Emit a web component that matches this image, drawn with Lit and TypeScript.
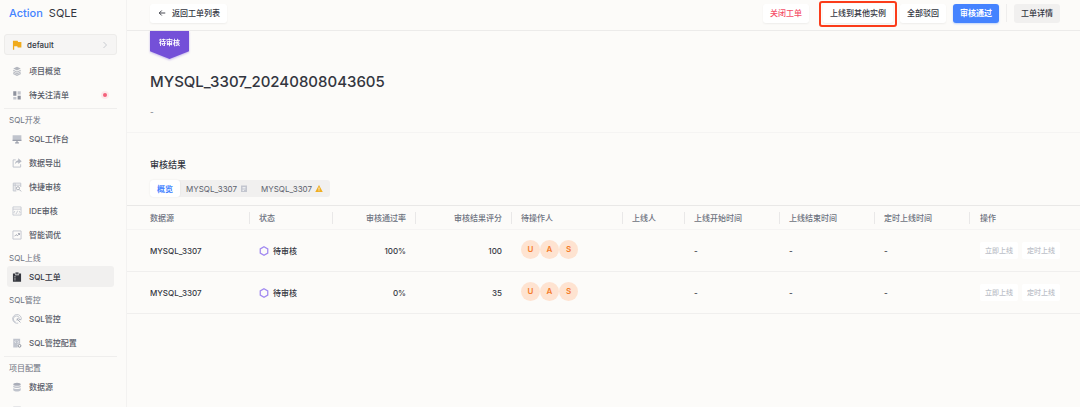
import { LitElement, html, css, svg, nothing } from "lit";
import { customElement } from "lit/decorators.js";
import { classMap } from "lit/directives/class-map.js";

const glyphs = {
  layers: svg`<path fill="#b4b7bf" d="M8 1 14 4 8 7.2 2 4z"/><path fill="none" stroke="#b4b7bf" stroke-width="1.7" d="M2 6.6 8 10l6-3.4M2 9.4 8 12.7l6-3.3M2 12 8 15l6-3"/>`,
  grid: svg`<path fill="#8f939e" d="M2 2h5v7H2zM9 9h5v6H9z"/><path fill="#c3c6cd" d="M2 11h5v4H2zM9 2h5v5H9z"/>`,
  monitor: svg`<path fill="#c0c4cd" d="M1 2h14v9H1z"/><path fill="#9a9eaa" d="M1 9h14v2H1zM7 11h2v2H7zM5 13h6v2H5z"/>`,
  share: svg`<path fill="none" stroke="#c0c4cd" stroke-width="1.6" d="M6 3H1.800v11.500h12V10"/><path fill="#b4b8c2" d="M10 .500l5.500 4.500L10 9.500V6.800C7.600 6.700 6 8 4.500 10.500 4.800 6.500 7 3.800 10 3.500z"/>`,
  audit: svg`<path fill="none" stroke="#c0c4cd" stroke-width="1.5" d="M14 8V1.800H2v12.500h5M2 5h12M5 2v12"/><circle cx="9.500" cy="10" r="2.500" fill="none" stroke="#a9adb8" stroke-width="1.500"/><path stroke="#a9adb8" stroke-width="1.500" d="M11.500 12l3 3"/>`,
  code: svg`<path fill="none" stroke="#c0c4cd" stroke-width="1.300" d="M1.500 1.500h13v13h-13zM1.500 5h13M5 8l-2 2 2 2M11 8l2 2-2 2M9 7.500l-2 5"/>`,
  trend: svg`<path fill="none" stroke="#c0c4cd" stroke-width="1.400" d="M1.500 1.500h13v13h-13z"/><path fill="none" stroke="#9a9eaa" stroke-width="1.400" d="M4 10l2.500-2.500L9 9l3-3M9.500 5.500H12V8"/>`,
  clipboard: svg`<path fill="#36383f" d="M1.500 2.500H5V5h6V2.500h3.500v13h-13z"/><path fill="#55575e" d="M5.500.500h5V4h-5z"/><path stroke="#fff" stroke-width="1.300" d="M4 7.500h1.500M4 10h1.500M4 12.500h1.500"/>`,
  gauge: svg`<path fill="none" stroke="#c0c4cd" stroke-width="1.500" d="M10 14.500A7 7 0 1 1 15 8M6 13a5 5 0 1 1 6-6M8 11V7.500h3.500"/><path fill="none" stroke="#a9adb8" stroke-width="1.500" d="M8 8l5.500 5.500M11 9h4"/>`,
  config: svg`<path fill="#c0c4cd" d="M2 1h11v8H9v6H2z"/><path fill="none" stroke="#fff" d="M6 4L4.500 6 6 8M9 4l1.500 2L9 8"/><circle cx="12" cy="12.500" r="2.200" fill="none" stroke="#8f939e" stroke-width="1.600"/>`,
  database: svg`<ellipse cx="8" cy="3.500" rx="6" ry="2.500" fill="#a9adb8"/><path fill="#c0c4cd" d="M2 5.500c2 2 10 2 12 0V8c-2 2-10 2-12 0zM2 9.500c2 2 10 2 12 0V13c-2 2.700-10 2.700-12 0z"/>`,
  template: svg`<path fill="#c0c4cd" d="M2 1h12v14H2z"/>`,
  flag: svg`<path fill="#f0ab1c" d="M1.500 1H9l.800 2H15v9H9.200l-.800-2H3.500v5.500h-2z"/>`,
  chevron: svg`<path fill="none" stroke="#c3c5cb" stroke-width="1.800" d="M5 2l6 6-6 6"/>`,
  back: svg`<path fill="none" stroke="#33363f" stroke-width="1.800" d="M14.500 8H2.500M7.500 3 2.500 8l5 5"/>`,
  note: svg`<path fill="#c3c6cf" d="M2 1h12v13H2z"/><path stroke="#fff" stroke-width="1.400" d="M5 5h6M5 8h6M5 11h3"/>`,
  warning: svg`<path fill="#efae22" d="M8 0l7.500 14H.500z"/><path stroke="#fff" stroke-width="1.700" d="M8 5v4.500M8 10.800v1.500"/>`,
  hexagon: svg`<path fill="none" stroke="#a088f0" stroke-width="2" d="M8 1.200 14 4.600v6.800L8 14.800 2 11.400V4.600z"/>`,
};
type Glyph = keyof typeof glyphs;

const icon = (name: Glyph, size = "") =>
  html`<svg class="icon ${size}" viewBox="0 0 16 16" aria-hidden="true">${glyphs[name]}</svg>`;

interface NavItem { icon: Glyph; label?: string; dot?: boolean; active?: boolean }
interface NavGroup { title?: string; divided?: boolean; items: NavItem[] }

const navigation: NavGroup[] = [
  { items: [{ icon: "layers", label: "项目概览" }, { icon: "grid", label: "待关注清单", dot: true }] },
  {
    title: "SQL开发", divided: true,
    items: [
      { icon: "monitor", label: "SQL工作台" },
      { icon: "share", label: "数据导出" },
      { icon: "audit", label: "快捷审核" },
      { icon: "code", label: "IDE审核" },
      { icon: "trend", label: "智能调优" },
    ],
  },
  { title: "SQL上线", items: [{ icon: "clipboard", label: "SQL工单", active: true }] },
  { title: "SQL管控", items: [{ icon: "gauge", label: "SQL管控" }, { icon: "config", label: "SQL管控配置" }] },
  { title: "项目配置", divided: true, items: [{ icon: "database", label: "数据源" }, { icon: "template" }] },
];

const shared = css`
  * { box-sizing: border-box; }
  button { font: inherit; color: inherit; border: 0; background: none; margin: 0; padding: 0; white-space: nowrap; }
  .icon { display: block; flex: none; width: 10px; height: 10px; }
  .icon.small { width: 8px; height: 8px; }
`;

@customElement("side-nav")
class SideNav extends LitElement {
  static styles = [shared, css`
    :host { display: block; width: 127px; flex: none; height: 100vh; overflow: hidden; border-right: 1px solid #f3f2f1; padding: 0 9px 0 4px; }
    .logo { display: flex; gap: 6px; padding-left: 5px; height: 26px; align-items: center; font-size: 11px; color: #33363f; margin-bottom: 8px; }
    .brand { color: #4583ff; font-weight: 500; }
    .project { display: flex; align-items: center; gap: 5px; width: 100%; height: 21px; padding: 0 7px; border: 1px solid #edecea; border-radius: 3px; background: #f6f5f4; margin-bottom: 5px; color: #33363f; font-weight: 500; }
    .name { flex: 1; text-align: left; }
    .divided { border-top: 1px solid #efeeed; }
    .title { height: 18px; line-height: 16px; padding: 2px 0 0 5px; color: #6d7280; }
    .divided .title { height: 19px; padding-top: 3px; }
    .item { display: flex; align-items: center; gap: 7px; height: 21px; margin: 0 3px 3px; padding: 0 5px; border-radius: 3px; color: #565a66; text-decoration: none; font-weight: 500; }
    .active { background: #f1f0ef; color: #33363f; }
    .label { flex: 1; }
    .dot { width: 4px; height: 4px; margin-right: 2px; border-radius: 50%; background: #f4607a; box-shadow: 0 0 0 2px #fde9eb; }
  `];

  render() {
    return html`
      <div class="logo"><span class="brand">Action</span><span>SQLE</span></div>
      <button class="project">${icon("flag")}<span class="name">default</span>${icon("chevron", "small")}</button>
      <nav>
        ${navigation.map((group) => html`
          <div class=${classMap({ divided: !!group.divided })}>
            ${group.title ? html`<div class="title">${group.title}</div>` : nothing}
            ${group.items.map((item) => html`
              <a href="#" class=${classMap({ item: true, active: !!item.active })}>
                ${icon(item.icon)}
                ${item.label ? html`<span class="label">${item.label}</span>` : nothing}
                ${item.dot ? html`<span class="dot"></span>` : nothing}
              </a>`)}
          </div>`)}
      </nav>`;
  }
}

const columns = [
  { label: "数据源", cls: "source" },
  { label: "状态", cls: "status-col" },
  { label: "审核通过率", cls: "status-col", end: true },
  { label: "审核结果评分", cls: "score", end: true },
  { label: "待操作人", cls: "people" },
  { label: "上线人", cls: "person" },
  { label: "上线开始时间", cls: "time" },
  { label: "上线结束时间", cls: "time" },
  { label: "定时上线时间", cls: "time" },
  { label: "操作", cls: "" },
];
const rows = [{ rate: "100%", score: 100 }, { rate: "0%", score: 35 }];

@customElement("audit-table")
class AuditTable extends LitElement {
  static styles = [shared, css`
    :host { display: block; border-top: 1px solid #e9e8e7; }
    table { width: 100%; table-layout: fixed; border-collapse: separate; border-spacing: 0; }
    .source { width: 123px; }
    .status-col { width: 83px; }
    .score { width: 96px; }
    .time { width: 95px; }
    .people { width: 111px; }
    .person { width: 62px; }
    th { height: 24px; padding: 0; text-align: left; font-weight: 500; color: #6d7280; border-bottom: 1px solid #f5f4f3; white-space: nowrap; }
    .head { display: block; line-height: 12px; padding: 0 9px; border-right: 1px solid #e9e8e8; }
    th:first-child .head { padding-left: 23px; }
    th:last-child .head { border-right: 0; }
    td { height: 42px; padding: 0 9px; border-bottom: 1px solid #f0efee; color: #33363f; font-weight: 500; white-space: nowrap; }
    td:first-child { padding-left: 23px; }
    .end { text-align: right; }
    td.end { padding-right: 10px; }
    .status { display: flex; align-items: center; gap: 4px; }
    .avatars { display: flex; padding-bottom: 3px; }
    .avatar { width: 19px; height: 19px; line-height: 19px; border-radius: 50%; background: #fee3d1; color: #f47b2a; text-align: center; font-weight: 600; }
    td:last-child, th:last-child .head { padding-left: 10px; }
    .actions { display: flex; gap: 4px; }
    .action { height: 17px; padding: 0 5px; border-radius: 2px; background: #fff; color: #bcbfc8; font-size: 7px; }
  `];

  render() {
    return html`
      <table>
        <thead><tr>
          ${columns.map((c) => html`<th scope="col" class=${c.cls}><span class=${classMap({ head: true, end: !!c.end })}>${c.label}</span></th>`)}
        </tr></thead>
        <tbody>
          ${rows.map((row) => html`<tr>
            <td>MYSQL_3307</td>
            <td><span class="status">${icon("hexagon")}待审核</span></td>
            <td class="end">${row.rate}</td>
            <td class="end">${row.score}</td>
            <td><div class="avatars">${["U", "A", "S"].map((a) => html`<span class="avatar">${a}</span>`)}</div></td>
            <td></td><td>-</td><td>-</td><td>-</td>
            <td><div class="actions"><button class="action" disabled>立即上线</button><button class="action" disabled>定时上线</button></div></td>
          </tr>`)}
        </tbody>
      </table>`;
  }
}

@customElement("app-root")
class AppRoot extends LitElement {
  static styles = [shared, css`
    :host { display: flex; height: 100vh; overflow: hidden; background: #fcfbf9; color: #33363f; font-family: Inter, "Noto Sans CJK SC", sans-serif; font-size: 8px; line-height: 12px; }
    main { flex: 1; min-width: 0; }
    .bar { display: flex; align-items: center; justify-content: space-between; height: 31px; padding: 0 20px 4px 23px; border-bottom: 1px solid #ecebea; }
    .group { display: flex; align-items: center; gap: 7px; }
    .btn { display: flex; align-items: center; gap: 6px; height: 19px; padding: 0 7px; border-radius: 3px; background: #fff; box-shadow: 0 1px 2px #0000000f; font-weight: 500; }
    .return { padding: 0 7px 0 8px; }
    .danger { color: #f4506a; }
    .primary { background: #4583ff; color: #fff; box-shadow: 0 1px 2px #4583ff55; font-weight: 700; }
    .plain { background: #f1f0ef; box-shadow: none; }
    .marked { position: relative; margin-left: 7px; }
    .marked::after { content: ""; position: absolute; inset: -3px -4px -4px; border: 2px solid #fb3c1a; border-radius: 3px; pointer-events: none; }
    .rule { width: 1px; height: 18px; background: #efeeed; }
    .intro { padding: 0 23px; height: 102px; border-bottom: 1px solid #f5f4f3; }
    .ribbon { width: 39px; filter: drop-shadow(0 1px 1px #7350d866); }
    .flag { height: 28px; padding-top: 6px; background: #7450d8; clip-path: polygon(0 0, 100% 0, 100% 72%, 50% 100%, 0 72%); color: #fff; font-weight: 700; font-size: 7px; text-align: center; }
    h1 { margin: 12px 0 13px; font-size: 15px; line-height: 22px; font-weight: 500; }
    .desc { margin: 0; color: #6d7280; }
    .result { padding: 24px 23px 8px; }
    h2 { margin: 0 0 8px; font-size: 9px; line-height: 15px; font-weight: 500; }
    .tabs { display: inline-flex; height: 17px; border-radius: 3px; background: #f1f0ef; vertical-align: top; }
    .tab { display: flex; align-items: center; gap: 3px; padding: 0 7px; color: #5c606c; }
    .tab + .tab { padding-left: 6px; }
    .current { background: #fff; border-radius: 3px; color: #4583ff; font-weight: 700; box-shadow: 0 0 2px #00000014; }
  `];

  render() {
    return html`
      <side-nav></side-nav>
      <main>
        <header class="bar">
          <button class="btn return">${icon("back", "small")}返回工单列表</button>
          <div class="group">
            <button class="btn danger">关闭工单</button>
            <div class="marked"><button class="btn">上线到其他实例</button></div>
            <button class="btn">全部驳回</button>
            <button class="btn primary">审核通过</button>
            <span class="rule"></span>
            <button class="btn plain">工单详情</button>
          </div>
        </header>
        <section class="intro">
          <div class="ribbon"><div class="flag">待审核</div></div>
          <h1>MYSQL_3307_20240808043605</h1>
          <p class="desc">-</p>
        </section>
        <section class="result">
          <h2>审核结果</h2>
          <div class="tabs" role="tablist">
            <button class="tab current" role="tab" aria-selected="true">概览</button>
            <button class="tab" role="tab">MYSQL_3307${icon("note", "small")}</button>
            <button class="tab" role="tab">MYSQL_3307${icon("warning", "small")}</button>
          </div>
        </section>
        <audit-table></audit-table>
      </main>`;
  }
}
